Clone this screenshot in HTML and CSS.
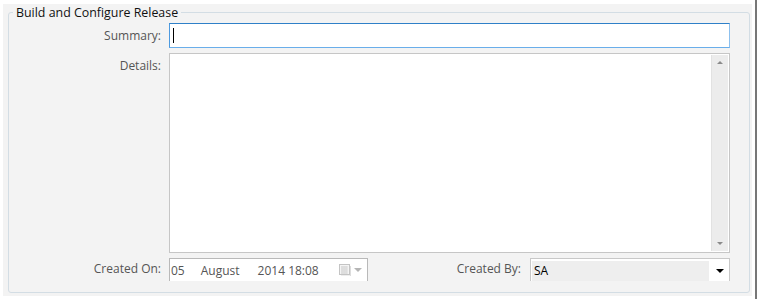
FILE: index.html
```html
<!DOCTYPE html>
<html lang="en">
<head>
    <meta charset="UTF-8">
    <meta name="viewport" content="width=device-width, initial-scale=1.0">
    <title>Build and Configure Release</title>
    <link rel="stylesheet" href="styles.css">
</head>
<body>
    <div class="screen">
        <div class="panel">
            <fieldset class="group">
                <legend>Build and Configure Release</legend>
                <div class="row">
                    <label class="label" for="summary">Summary:</label>
                    <div class="summary">
                        <input type="text" id="summary">
                        <span class="caret"></span>
                    </div>
                </div>
                <div class="row">
                    <label class="label" for="details">Details:</label>
                    <div class="details">
                        <div class="details-text" id="details"></div>
                        <div class="scroll">
                            <span class="arrow up"></span>
                            <span class="arrow down"></span>
                        </div>
                    </div>
                </div>
                <div class="row bottom">
                    <label class="label">Created On:</label>
                    <div class="date">
                        <span class="date-text">05</span>
                        <span class="date-text month">August</span>
                        <span class="date-text">2014 18:08</span>
                        <span class="cal">
                            <svg width="12" height="12" viewBox="0 0 12 12">
                                <rect x="0.5" y="0.5" width="10" height="10" fill="#f4f4f4" stroke="#c4c4c4"/>
                                <path d="M2 3h7M2 5h7M2 7h7M2 9h7M3 2v8M5 2v8M7 2v8" stroke="#d6d6d6" stroke-width="1"/>
                                <path d="M11.5 2v10H2" stroke="#dcdcdc" fill="none"/>
                            </svg>
                            <span class="cal-arrow"></span>
                        </span>
                    </div>
                    <label class="label by">Created By:</label>
                    <div class="select">
                        <span class="select-text">SA</span>
                        <span class="select-arrow"></span>
                    </div>
                </div>
            </fieldset>
        </div>
        <div class="edge"></div>
    </div>
</body>
</html>
```

FILE: styles.css
```css
body {
    margin: 0;
    background: #fff;
    font-family: "Open Sans", "Noto Sans", sans-serif;
    font-size: 12px;
}
.screen {
    display: flex;
    height: 299px;
}
.panel {
    background: #f3f3f3;
    margin: 4px 0 3px 3px;
    width: 749px;
    padding: 0 2px 0 5px;
    box-sizing: border-box;
}
.edge {
    width: 2px;
    margin-left: 3px;
    background: #777;
}
.group {
    margin: 0;
    padding: 2px 19px 8px 0;
    border: 1px solid #d3dde4;
    border-radius: 3px;
    height: 289px;
    box-sizing: border-box;
}
legend {
    margin-left: 4px;
    padding: 0 3px;
    color: #111;
    font-size: 12.4px;
    line-height: 17px;
}
.row {
    display: grid;
    grid-template-columns: 152px 1fr;
    column-gap: 8px;
    margin-bottom: 5px;
}
.label {
    text-align: right;
    color: #555;
    line-height: 25px;
}
.summary {
    position: relative;
    height: 25px;
    box-sizing: border-box;
    border: 1px solid #4c9ae0;
    border-top-color: #2f80c8;
    border-right-color: #8cc0ee;
    border-bottom-color: #6aaeea;
    background: #fff;
}
.summary input {
    display: block;
    width: 100%;
    height: 100%;
    box-sizing: border-box;
    border: none;
    padding: 0;
    background: transparent;
    outline: none;
    margin: 0;
}
.caret {
    position: absolute;
    left: 3px;
    top: 4px;
    width: 1px;
    height: 15px;
    background: #000;
}
.details {
    height: 200px;
    background: #fff;
    border: 1px solid #c6c6c6;
    box-sizing: border-box;
    display: flex;
}
.details-text {
    flex: 1;
}
.scroll {
    width: 16px;
    margin: 1px 1px 1px 0;
    background: #ececec;
    border-left: 1px solid #e2e2e2;
    display: flex;
    flex-direction: column;
    justify-content: space-between;
    align-items: center;
    padding: 6px 0;
}
.arrow {
    width: 0;
    height: 0;
    border-left: 3px solid transparent;
    border-right: 3px solid transparent;
}
.arrow.up {
    border-bottom: 3px solid #8a8a8a;
}
.arrow.down {
    border-top: 3px solid #8a8a8a;
}
.bottom {
    grid-template-columns: 152px 199px 1fr 200px;
    margin: 2px 0 0;
}
.bottom .label {
    line-height: 22px;
}
.date {
    height: 23px;
    border: 1px solid #b9b9b9;
    border-bottom: none;
    background: #fff;
    box-sizing: border-box;
    display: flex;
    align-items: center;
    padding-left: 1px;
    color: #555;
}
.date-text {
    margin-right: 16px;
}
.date-text.month {
    margin-right: 18px;
}
.cal {
    margin-left: auto;
    margin-right: 5px;
    display: flex;
    align-items: center;
    gap: 3px;
}
.cal-arrow {
    width: 0;
    height: 0;
    border-left: 4px solid transparent;
    border-right: 4px solid transparent;
    border-top: 4px solid #b5b5b5;
}
.by {
    padding-right: 1px;
}
.select {
    height: 23px;
    border: 1px solid #c8c8c8;
    border-bottom: none;
    background: #fff;
    box-sizing: border-box;
    display: flex;
    align-items: center;
    padding: 1px 0 0 1px;
}
.select-text {
    flex: 1;
    background: #eeeeee;
    height: 20px;
    line-height: 20px;
    padding-left: 2px;
    color: #000;
}
.select-arrow {
    width: 0;
    height: 0;
    margin: 0 5px 0 7px;
    border-left: 4px solid transparent;
    border-right: 4px solid transparent;
    border-top: 4px solid #000;
}
```
